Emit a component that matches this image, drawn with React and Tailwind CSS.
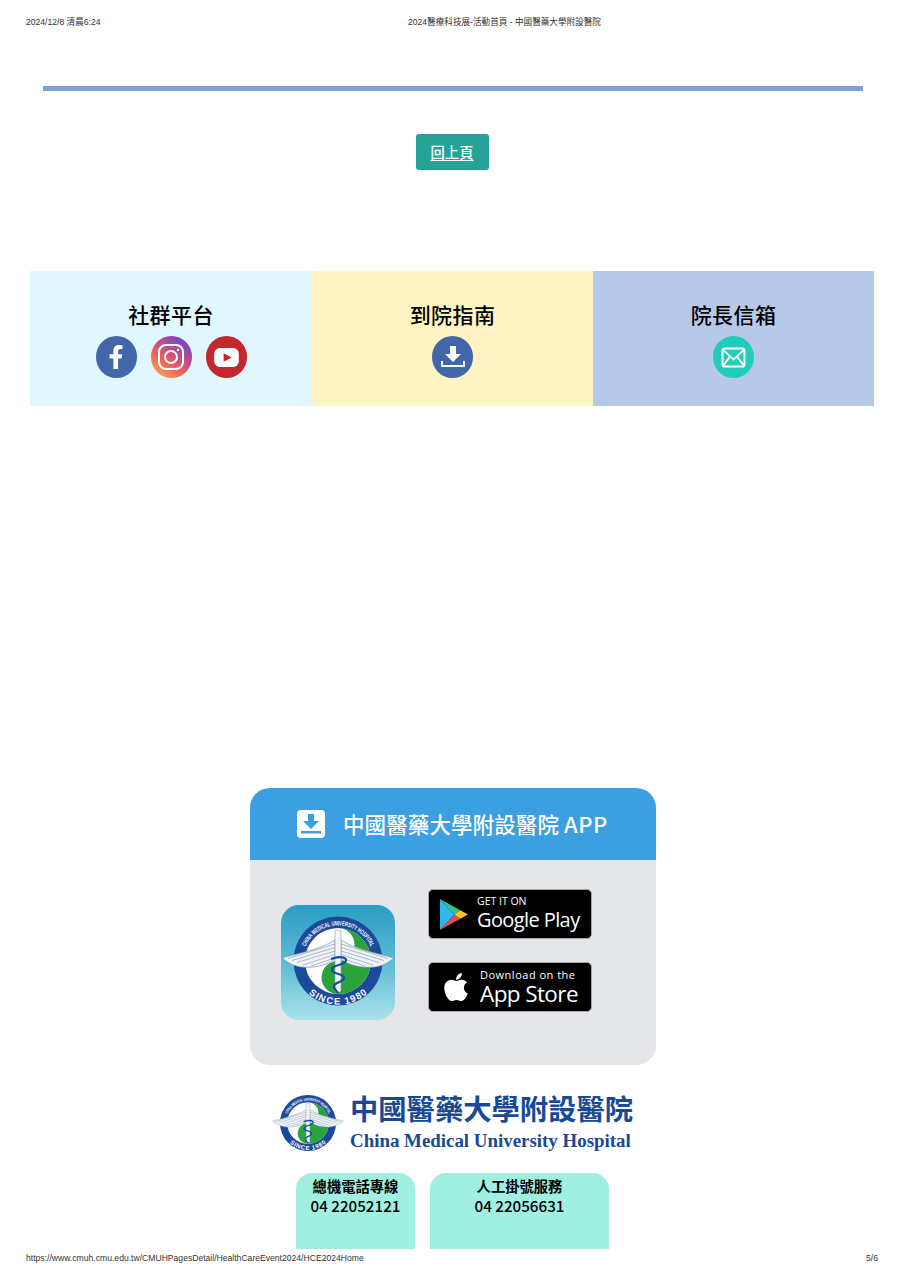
import { FaApple, FaFacebookF } from "react-icons/fa";

const cjk = "font-['Noto_Sans_CJK_TC','Noto_Sans',sans-serif]";

function Emblem({ id, className }) {
  return (
    <svg viewBox="0 0 114 92" className={className}>
      <defs>
        <path id={`${id}-top`} d="M23.6 33.9 A35.5 35.5 0 0 1 90.4 33.9" />
        <path id={`${id}-bot`} d="M25 64 A37 37 0 0 0 89 64" />
      </defs>
      <circle cx="57" cy="46" r="44.5" fill="#1b4a9b" />
      <circle cx="57" cy="46" r="33" fill="#fff" />
      <path d="M57 13 A33 33 0 0 1 57 79 A16.5 16.5 0 0 1 57 46 A16.5 16.5 0 0 0 57 13Z" fill="#2ca23c" />
      <text fontSize="6.4" fontWeight="700" fill="#fff" fontFamily="Liberation Sans, sans-serif">
        <textPath href={`#${id}-top`} startOffset="50%" textAnchor="middle" textLength="82" lengthAdjust="spacingAndGlyphs">CHINA MEDICAL UNIVERSITY HOSPITAL</textPath>
      </text>
      <text fontSize="9.5" fontWeight="700" fill="#fff" fontFamily="Liberation Sans, sans-serif" letterSpacing="0.2">
        <textPath href={`#${id}-bot`} startOffset="50%" textAnchor="middle" dominantBaseline="hanging">SINCE 1980</textPath>
      </text>
      {/* wings */}
      <path d="M1 43 C18 38 38 35 54 25 L54 44 C44 52 30 53 20 52 C12 51 6 47 1 43Z" fill="#f0f3f6" stroke="#6f8ba6" strokeWidth="0.6" />
      <path d="M113 43 C96 38 76 35 60 25 L60 44 C70 52 84 53 94 52 C102 51 108 47 113 43Z" fill="#f0f3f6" stroke="#6f8ba6" strokeWidth="0.6" />
      <path d="M7 43.5 L54 29 M11 45.5 L54 32.5 M16 47.5 L54 36 M22 50 L54 39.5 M30 51 L54 43 M107 43.5 L60 29 M103 45.5 L60 32.5 M98 47.5 L60 36 M92 50 L60 39.5 M84 51 L60 43" stroke="#8ba2b8" strokeWidth="0.7" fill="none" />
      {/* staff */}
      <rect x="54" y="15" width="6" height="62" rx="1.5" fill="#f2f5f7" stroke="#7f98b0" strokeWidth="0.6" />
      <path d="M50 44 C60 40 68 43 64 47 C60 51 50 50 51 55 C52 60 64 58 63 63 C62 68 52 67 53 72 C53.5 75 56 76 57 78" stroke="#1b4a9b" strokeWidth="2.2" fill="none" />
    </svg>
  );
}

function Circle({ className, children }) {
  return <div className={`w-[41px] h-[42px] rounded-full flex items-center justify-center ${className}`}>{children}</div>;
}

function Section({ title, bg, width, children }) {
  return (
    <div className={`flex flex-col items-center pt-[28px] ${width} ${bg}`}>
      <div className={`text-[21px] leading-[30px] font-medium text-black tracking-[0.4px] ${cjk}`}>{title}</div>
      <div className="flex gap-[14px] mt-[7px]">{children}</div>
    </div>
  );
}

function GooglePlayIcon() {
  return (
    <svg viewBox="0 0 30 34" className="w-[29px] h-[33px]">
      <path d="M1 1 L16 17 L1 33Z" fill="#2fb7f0" />
      <path d="M1 1 L22 12.5 L16 17Z" fill="#33c481" />
      <path d="M1 33 L22 21.5 L16 17Z" fill="#ea4a55" />
      <path d="M22 12.5 L30 17 L22 21.5 L16 17Z" fill="#fcc419" />
    </svg>
  );
}

export default function App() {
  return (
    <div className={`w-[904px] h-[1280px] bg-white flex flex-col overflow-hidden ${cjk}`}>
      <div className="flex pl-[26px] pt-[17px] h-[31px] text-[8.6px] leading-[11px] text-[#333] font-['Liberation_Sans','Noto_Sans_CJK_TC',sans-serif]">
        <div className="w-[382px]">2024/12/8 清晨6:24</div>
        <div>2024醫療科技展-活動首頁 - 中國醫藥大學附設醫院</div>
      </div>

      <div className="ml-[43px] mt-[55px] w-[820px] h-[5px] bg-[#7f9fd8]" />

      <div className="flex justify-center mt-[43px]">
        <a className="w-[73px] h-[36px] rounded-[3px] bg-[#26a397] flex items-center justify-center text-[14.3px] text-white font-medium underline underline-offset-2">回上頁</a>
      </div>

      <div className="flex mx-[30px] mt-[101px] h-[135px]">
        <Section title="社群平台" bg="bg-[#e0f7ff]" width="w-[282px]">
          <Circle className="bg-[#4267a8]">
            <FaFacebookF className="text-white text-[24px]" />
          </Circle>
          <Circle className="bg-[linear-gradient(35deg,#f9b24d_5%,#ee5b5b_40%,#8a44b8_80%,#5a55c4_100%)]">
            <svg viewBox="0 0 28 28" className="w-[28px] h-[28px]" fill="none" stroke="#fff" strokeWidth="2">
              <rect x="2" y="2" width="24" height="24" rx="7" />
              <circle cx="14" cy="14" r="6" />
              <circle cx="21" cy="7" r="1.2" fill="#fff" stroke="none" />
            </svg>
          </Circle>
          <Circle className="bg-[#c4272d]">
            <svg viewBox="0 0 26 20" className="w-[25px] h-[19px]">
              <rect width="26" height="20" rx="6" fill="#fff" />
              <path d="M10 5.5 L18.5 10 L10 14.5Z" fill="#c4272d" />
            </svg>
          </Circle>
        </Section>
        <Section title="到院指南" bg="bg-[#fdf3c3]" width="w-[281px]">
          <Circle className="bg-[#4267a8]">
            <svg viewBox="0 0 26 26" className="w-[26px] h-[26px]">
              <path d="M10 2 H16 V10 H21 L13 18 L5 10 H10Z" fill="#fff" />
              <path d="M2 17 V22 H24 V17" fill="none" stroke="#fff" strokeWidth="2" />
            </svg>
          </Circle>
        </Section>
        <Section title="院長信箱" bg="bg-[#b7c9e8]" width="w-[281px]">
          <Circle className="bg-[#20cdbd]">
            <svg viewBox="0 0 26 22" className="w-[25px] h-[21px]" fill="none" stroke="#fff" strokeWidth="2">
              <rect x="1.5" y="1.5" width="23" height="19" rx="2.5" />
              <path d="M2 3 L13 13 L24 3 M2 19.5 L9.5 10 M24 19.5 L16.5 10" />
            </svg>
          </Circle>
        </Section>
      </div>

      <div className="w-[406px] h-[277px] ml-[250px] mt-[382px] rounded-[20px] overflow-hidden bg-[#e5e6ea] flex flex-col">
        <div className="h-[72px] bg-[#3b9fe2] flex items-center pl-[47px] pb-[1px]">
          <svg viewBox="0 0 28 28" className="w-[28px] h-[28px]">
            <rect width="28" height="28" rx="4" fill="#fff" />
            <path d="M11 4 H17 V11 H22 L14 19 L6 11 H11Z" fill="#3b9fe2" />
            <rect x="4" y="21" width="20" height="2.5" fill="#3b9fe2" />
          </svg>
          <div className="ml-[18px] text-[21.5px] font-medium text-white tracking-[0.1px] whitespace-nowrap">
            中國醫藥大學附設醫院 <span className="text-[22px] tracking-[0.6px]">APP</span>
          </div>
        </div>
        <div className="flex-1 flex pl-[31px] pt-[29px]">
          <div className="w-[114px] h-[115px] mt-[16px] rounded-[18px] bg-[linear-gradient(180deg,#2a9cc3_0%,#62bed5_55%,#aae3ea_100%)] flex items-center justify-center pb-[4px]">
            <Emblem id="a" className="w-[114px] h-[92px]" />
          </div>
          <div className="ml-[33px] flex flex-col gap-[23px]">
            <div className="w-[164px] h-[50px] rounded-[5px] bg-black border border-[#a6a6a6] flex items-center pl-[10px] text-white">
              <GooglePlayIcon />
              <div className="ml-[9px] font-['Open_Sans',sans-serif]">
                <div className="text-[10.5px] leading-[12px] font-medium mt-[-2px] whitespace-nowrap">GET IT ON</div>
                <div className="text-[20px] leading-[25px] font-medium tracking-[-0.6px] whitespace-nowrap">Google Play</div>
              </div>
            </div>
            <div className="w-[164px] h-[50px] rounded-[5px] bg-black border border-[#a6a6a6] flex items-center pl-[11px] text-white">
              <FaApple className="text-[32px]" />
              <div className="ml-[8px] font-['Open_Sans',sans-serif]">
                <div className="text-[11px] leading-[12px] font-medium tracking-[0.5px] whitespace-nowrap mt-[1px]">Download on the</div>
                <div className="text-[22.5px] leading-[26px] font-medium tracking-[-0.6px] whitespace-nowrap">App Store</div>
              </div>
            </div>
          </div>
        </div>
      </div>

      <div className="flex ml-[272px] mt-[28px] h-[64px] items-start">
        <Emblem id="b" className="w-[72px] h-[58px] mt-[1px]" />
        <div className="ml-[6px] flex flex-col items-start">
          <div className="text-[28.3px] leading-[38px] font-bold text-[#164a94] whitespace-nowrap font-['Noto_Sans_CJK_TC',serif] -mt-[4px]">中國醫藥大學附設醫院</div>
          <div className="text-[18.9px] leading-[22px] font-bold text-[#164a94] whitespace-nowrap font-['Liberation_Serif',serif] mt-[3px]">China Medical University Hospital</div>
        </div>
      </div>

      <div className="flex ml-[296px] mt-[16px] gap-[15px]">
        <div className="w-[119px] h-[76px] rounded-t-[16px] bg-[#a0f0e2] flex flex-col items-center pt-[4px] text-black">
          <div className="text-[14.3px] leading-[18px] font-semibold">總機電話專線</div>
          <div className="text-[15.2px] leading-[21px] font-medium">04 22052121</div>
        </div>
        <div className="w-[179px] h-[76px] rounded-t-[16px] bg-[#a0f0e2] flex flex-col items-center pt-[4px] text-black">
          <div className="text-[14.3px] leading-[18px] font-semibold">人工掛號服務</div>
          <div className="text-[15.2px] leading-[21px] font-medium">04 22056631</div>
        </div>
      </div>

      <div className="flex justify-between pl-[26px] pr-[26px] mt-[4px] text-[8.6px] leading-[11px] text-[#333] font-['Liberation_Sans',sans-serif]">
        <div>https://www.cmuh.cmu.edu.tw/CMUHPagesDetail/HealthCareEvent2024/HCE2024Home</div>
        <div>5/6</div>
      </div>
    </div>
  );
}
